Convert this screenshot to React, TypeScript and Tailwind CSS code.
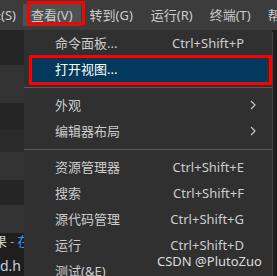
import React from "react";

const FONT = '"Noto Sans", "Noto Sans CJK SC", sans-serif';

function Chevron() {
  return (
    <svg width="6" height="10" viewBox="0 0 6 10" className="block">
      <polyline points="1,1 5,5 1,9" fill="none" stroke="#c5c5c5" strokeWidth="1.2" />
    </svg>
  );
}

type Item = { label: string; shortcut?: string; sub?: boolean; active?: boolean };

function MenuRow({ item }: { item: Item }) {
  return (
    <div
      className={`mx-[6px] h-[26px] flex items-center justify-between pl-[25px] pr-[10px] ${
        item.active ? "bg-[#04395e] text-white" : "text-[#cccccc]"
      }`}
    >
      <span>{item.label}</span>
      {item.shortcut && <span className="mr-[12px]">{item.shortcut}</span>}
      {item.sub && <Chevron />}
    </div>
  );
}

function Sep() {
  return <div className="h-[10px] flex items-center"><div className="h-px w-full bg-[#5a5a5a]" /></div>;
}

export default function App() {
  return (
    <div
      className="relative w-[277px] h-[276px] overflow-hidden bg-[#1e1e1e] text-[13px] leading-none"
      style={{ fontFamily: FONT }}
    >
      {/* menubar */}
      <div className="h-[30px] bg-[#3c3c3c] flex items-center text-[#cccccc] whitespace-nowrap">
        <span className="ml-[-33px] pl-2 pr-[7px]">选择(S)</span>
        <span className="px-2 h-[22px] flex items-center bg-[#505050]">查看(V)</span>
        <span className="pl-[9px] pr-2">转到(G)</span>
        <span className="pl-[10px] pr-2">运行(R)</span>
        <span className="pl-[9px] pr-2">终端(T)</span>
        <span className="pl-[9px] pr-2">帮助(H)</span>
      </div>

      {/* left panel stripes */}
      <div className="flex flex-col w-[24px]">
        <div className="h-[35px] bg-[#252526]" />
        <div className="h-[38px] bg-[#333333]" />
        <div className="h-[27px] bg-[#252526]" />
        <div className="h-[22px] bg-[#2a2a2a]" />
        <div className="h-[28px] bg-[#333333]" />
        <div className="h-[25px] bg-[#252526]" />
        <div className="h-[28px] bg-[#333333]" />
        <div className="h-[43px] bg-[#1e1e1e] flex flex-col whitespace-nowrap">
          <div className="h-[22px] flex items-center pb-[6px] ml-[-6px] text-[#cccccc]">
            果<span className="mx-[3px] text-[#9d9d9d]">-</span>
            <span className="text-[#3794ff]">在</span>
          </div>
          <div className="h-[21px] flex items-center text-[#c5cfe0] text-[14px]">d.h</div>
        </div>
      </div>

      {/* dropdown menu */}
      <div className="absolute left-[24px] top-[30px] w-[249px] h-[260px] bg-[#303031] border-r border-[#454545] rounded-tr-[4px] whitespace-nowrap">
        <MenuRow item={{ label: "命令面板...", shortcut: "Ctrl+Shift+P" }} />
        <MenuRow item={{ label: "打开视图...", active: true }} />
        <Sep />
        <MenuRow item={{ label: "外观", sub: true }} />
        <MenuRow item={{ label: "编辑器布局", sub: true }} />
        <Sep />
        <MenuRow item={{ label: "资源管理器", shortcut: "Ctrl+Shift+E" }} />
        <MenuRow item={{ label: "搜索", shortcut: "Ctrl+Shift+F" }} />
        <MenuRow item={{ label: "源代码管理", shortcut: "Ctrl+Shift+G" }} />
        <MenuRow item={{ label: "运行", shortcut: "Ctrl+Shift+D" }} />
        <MenuRow item={{ label: "测试(&E)" }} />
      </div>

      {/* annotation boxes */}
      <div className="absolute left-[27px] top-[1px] w-[58px] h-[24px] border-[3px] border-[#ff0000]" />
      <div className="absolute left-[29px] top-[55px] w-[243px] h-[30px] border-[3px] border-[#ff0000]" />

      {/* watermark */}
      <div className="absolute left-[157px] top-[255px] text-[13px] text-[#dcdcdc] whitespace-nowrap">
        CSDN @PlutoZuo
      </div>
    </div>
  );
}
